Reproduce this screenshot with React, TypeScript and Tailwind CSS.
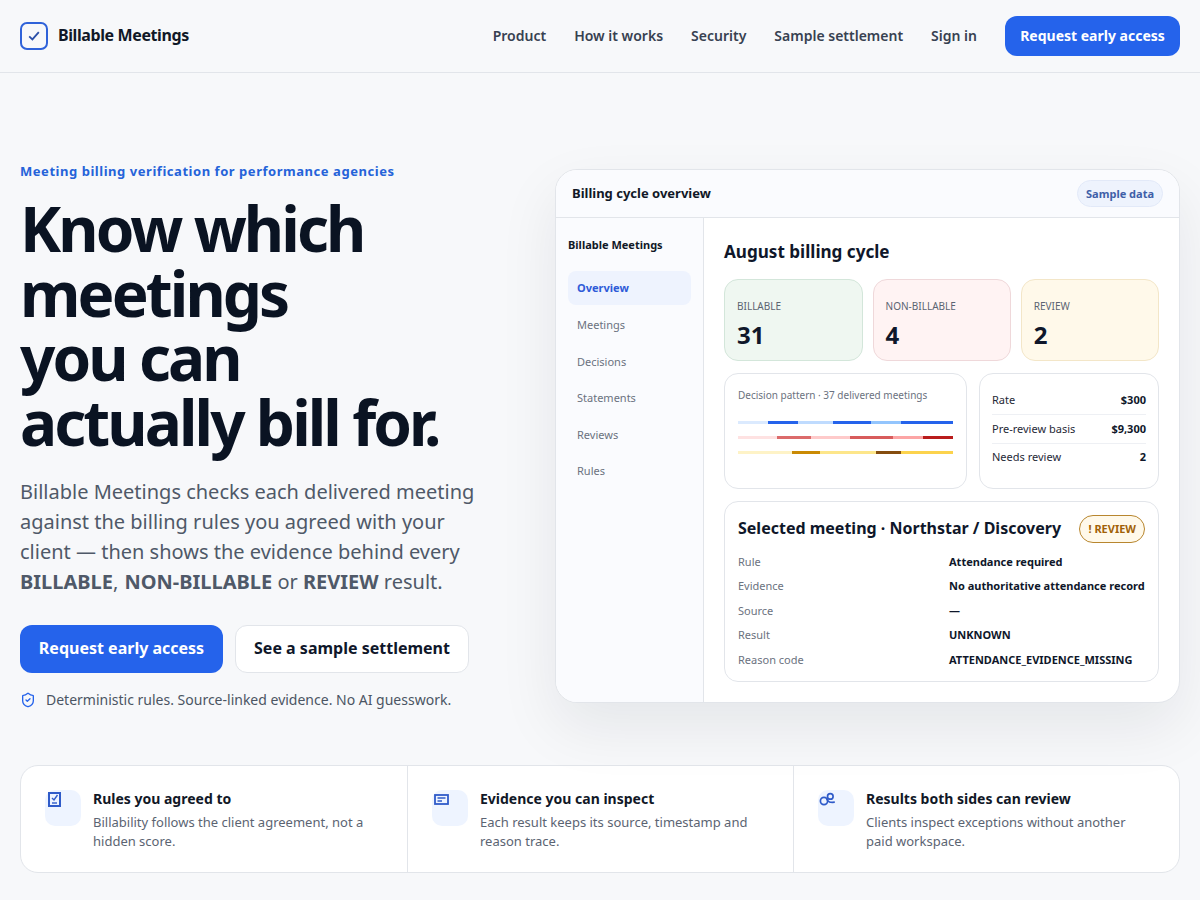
import React from "react";

const NAV = ["Product", "How it works", "Security", "Sample settlement", "Sign in"];
const SIDE = ["Meetings", "Decisions", "Statements", "Reviews", "Rules"];

function Bar({ segs }: { segs: [number, string][] }) {
  return (
    <div className="flex h-[3px] w-[215px]">
      {segs.map(([w, c], i) => (
        <div key={i} className="h-full" style={{ width: w, background: c }} />
      ))}
    </div>
  );
}

function Stat({ label, value, cls }: { label: string; value: string; cls: string }) {
  return (
    <div className={`h-[82px] rounded-[14px] border px-3 pt-[16px] ${cls}`}>
      <div className="text-[10px] leading-[20px] text-[#5b6472]">{label}</div>
      <div className="mt-[4px] text-[24px] font-bold leading-[30px] text-[#0f172a]">{value}</div>
    </div>
  );
}

function Row({ k, v, cls }: { k: string; v: string; cls: string }) {
  return (
    <div className={`flex items-center justify-between text-[11px] ${cls}`}>
      <span className="text-[#1f2937]">{k}</span>
      <span className="font-bold text-[#0f172a]">{v}</span>
    </div>
  );
}

function Detail({ k, v }: { k: string; v: string }) {
  return (
    <div className="flex h-[24.4px] items-center text-[11px]">
      <span className="w-[211px] text-[#6b7280]">{k}</span>
      <span className="font-bold text-[#0f172a]">{v}</span>
    </div>
  );
}

function Feature({ icon, title, text, last, w }: { icon: React.ReactNode; title: string; text: string; last?: boolean; w: string }) {
  return (
    <div className={`flex h-full gap-[12px] pl-[24px] pt-[24px] ${w} ${last ? "" : "border-r border-[#e2e5ea]"}`}>
      <div className="h-[36px] w-[36px] shrink-0 rounded-[10px] bg-[#eef4ff]">{icon}</div>
      <div>
        <div className="text-[14px] font-bold leading-[18px] text-[#111827]">{title}</div>
        <div className="mt-[5px] w-[285px] text-[13px] leading-[19px] text-[#5b6472]">{text}</div>
      </div>
    </div>
  );
}

export default function App() {
  return (
    <div
      className="h-[900px] w-[1200px] overflow-hidden bg-[#f7f8fa]"
      style={{ fontFamily: '"Noto Sans", sans-serif' }}
    >
      <header className="flex h-[73px] items-center justify-between border-b border-[#e2e5ea] px-5 pb-[1px]">
        <div className="flex items-center gap-[10px]">
          <div className="flex h-[28px] w-[28px] items-center justify-center rounded-[7px] border-2 border-[#2f62d9]">
            <svg width="14" height="14" viewBox="0 0 14 14" fill="none" stroke="#2b4fa8" strokeWidth="1.8">
              <path d="M2.2 7.4 L5.4 10.4 L11.8 3.2" />
            </svg>
          </div>
          <span className="pb-[2px] text-[16px] font-bold tracking-[-0.4px] text-[#111827]">Billable Meetings</span>
        </div>
        <nav className="flex items-center gap-[28px]">
          {NAV.map((n) => (
            <span key={n} className="text-[14px] font-semibold text-[#374151]">{n}</span>
          ))}
          <span className="flex h-[40px] w-[175px] items-center justify-center rounded-[12px] bg-[#2563eb] text-[14px] font-bold text-white">
            Request early access
          </span>
        </nav>
      </header>

      <main className="flex items-center justify-between px-5 pt-[88px]">
        <div className="h-[550px] w-[480px]">
          <div className="text-[13px] font-bold leading-[20px] tracking-[0.54px] text-[#2563d9]">
            Meeting billing verification for performance agencies
          </div>
          <h1 className="mt-[15px] text-[62px] font-bold leading-[64.6px] tracking-[-2.9px] text-[#0a1322]">
            Know which
            <br />
            meetings
            <br />
            you can
            <br />
            actually bill for.
          </h1>
          <p className="mt-[23px] text-[20px] leading-[30px] text-[#4f5968]">
            Billable Meetings checks each delivered meeting against the billing rules you agreed with your client — then shows the evidence behind every{" "}
            <b className="font-bold">BILLABLE</b>, <b className="ml-[1px] font-bold">NON-BILLABLE</b> or{" "}
            <b className="font-bold">REVIEW</b> result.
          </p>
          <div className="mt-[28px] flex gap-[12px]">
            <span className="flex h-[48px] w-[203px] items-center justify-center rounded-[12px] bg-[#2563eb] pb-[2px] text-[16px] font-bold text-white">
              Request early access
            </span>
            <span className="flex h-[48px] w-[234px] items-center justify-center rounded-[12px] border border-[#e2e5ea] bg-white pb-[2px] text-[16px] font-bold text-[#0f172a]">
              See a sample settlement
            </span>
          </div>
          <div className="mt-[16px] flex items-center gap-[10px] text-[14px] text-[#4b5563]">
            <svg width="16" height="16" viewBox="0 0 24 24" fill="none" stroke="#2563eb" strokeWidth="2" strokeLinecap="round" strokeLinejoin="round">
              <path d="M20 13c0 5-3.5 7.5-7.66 8.95a1 1 0 0 1-.67-.01C7.5 20.5 4 18 4 13V6a1 1 0 0 1 1-1c2 0 4.5-1.2 6.24-2.72a1.17 1.17 0 0 1 1.52 0C14.51 3.81 17 5 19 5a1 1 0 0 1 1 1z" />
              <path d="m9 12 2 2 4-4" />
            </svg>
            <span>Deterministic rules. Source-linked evidence. No AI guesswork.</span>
          </div>
        </div>

        <div className="h-[534px] w-[625px] overflow-hidden rounded-[22px] border border-[#e2e5ea] bg-white shadow-[0_24px_60px_rgba(15,23,42,0.08)]">
          <div className="flex h-[48px] items-center justify-between border-b border-[#e2e5ea] bg-[#fafbfe] pl-[16px] pr-[16px]">
            <span className="text-[13px] font-bold text-[#111827]">Billing cycle overview</span>
            <span className="flex h-[27px] items-center rounded-full border border-[#e2e9f8] bg-[#eef3fd] px-[8px] pt-[1px] text-[11px] font-bold text-[#3f5fa8]">
              Sample data
            </span>
          </div>
          <div className="flex h-[485px]">
            <div className="w-[148px] border-r border-[#e2e5ea] bg-[#fafbfe] pl-[12px] pr-[12px] pt-[18px]">
              <div className="text-[11px] font-bold leading-[18px] text-[#111827]">Billable Meetings</div>
              <div className="mt-[17px] flex h-[34px] items-center rounded-[8px] bg-[#eef3fe] pl-[9px] text-[11px] font-bold text-[#2f5bd8]">
                Overview
              </div>
              <div className="mt-[2px]">
                {SIDE.map((s) => (
                  <div key={s} className="flex h-[36.5px] items-center pl-[9px] text-[11px] text-[#6b7280]">{s}</div>
                ))}
              </div>
            </div>
            <div className="flex-1 pl-[20px] pr-[20px] pt-[20px]">
              <div className="text-[17.1px] font-bold leading-[28px] text-[#0f172a]">August billing cycle</div>
              <div className="mt-[13px] grid grid-cols-[138.55px_138.2px_138.25px] gap-[10px]">
                <Stat label="BILLABLE" value="31" cls="border-[#d3e6da] bg-[#eff7f1]" />
                <Stat label="NON-BILLABLE" value="4" cls="border-[#efd8da] bg-[#fff3f3]" />
                <Stat label="REVIEW" value="2" cls="border-[#f3e6c8] bg-[#fff9ea]" />
              </div>
              <div className="mt-[12px] flex gap-[12px]">
                <div className="h-[116px] w-[243px] rounded-[14px] border border-[#e2e5ea] px-[13px] pt-[13px]">
                  <div className="text-[10px] leading-[16px] text-[#6b7280]">Decision pattern · 37 delivered meetings</div>
                  <div className="mt-[18px] flex flex-col gap-[12px]">
                    <Bar segs={[[30, "#dbeafe"], [30, "#2563eb"], [35, "#bfdbfe"], [38, "#2563eb"], [30, "#93c5fd"], [52, "#2563eb"]]} />
                    <Bar segs={[[39, "#fee2e2"], [34, "#dc6b6b"], [39, "#fecaca"], [43, "#d85c5c"], [30, "#fca5a5"], [30, "#b91c1c"]]} />
                    <Bar segs={[[54, "#fef3c7"], [28, "#ca8a04"], [56, "#fde68a"], [25, "#854d0e"], [52, "#fcd34d"]]} />
                  </div>
                </div>
                <div className="h-[116px] w-[180px] rounded-[14px] border border-[#e2e5ea] px-[12px] pt-[12px]">
                  <Row k="Rate" v="$300" cls="h-[29px] border-b border-[#eef0f4]" />
                  <Row k="Pre-review basis" v="$9,300" cls="h-[28.5px] border-b border-[#eef0f4]" />
                  <Row k="Needs review" v="2" cls="h-[27px]" />
                </div>
              </div>
              <div className="mt-[12px] h-[181px] w-[435px] rounded-[14px] border border-[#e2e5ea] px-[13px] pt-[13px]">
                <div className="flex items-center justify-between">
                  <span className="pb-[2px] text-[16px] font-bold text-[#0f172a]">Selected meeting · Northstar / Discovery</span>
                  <span className="flex h-[28px] items-center rounded-full border border-[#b8862e] bg-[#fff9ea] px-[8px] text-[11px] font-bold text-[#a16207]">! REVIEW</span>
                </div>
                <div className="mt-[7px]">
                  <Detail k="Rule" v="Attendance required" />
                  <Detail k="Evidence" v="No authoritative attendance record" />
                  <Detail k="Source" v="—" />
                  <Detail k="Result" v="UNKNOWN" />
                  <Detail k="Reason code" v="ATTENDANCE_EVIDENCE_MISSING" />
                </div>
              </div>
            </div>
          </div>
        </div>
      </main>

      <section className="mx-5 mt-[54px] flex h-[108px] rounded-[18px] border border-[#e2e5ea] bg-white">
        <Feature
          w="w-[387px]"
          title="Rules you agreed to"
          text="Billability follows the client agreement, not a hidden score."
          icon={
            <svg width="20" height="20" viewBox="0 0 20 20" fill="none" stroke="#2f5bc9" strokeWidth="2">
              <rect x="4" y="3" width="11" height="13" />
              <path d="M7 8 L9 10 L12.5 5" strokeWidth="1.4" />
              <path d="M7 13 H12" strokeWidth="1.4" />
            </svg>
          }
        />
        <Feature
          w="w-[386px]"
          title="Evidence you can inspect"
          text="Each result keeps its source, timestamp and reason trace."
          icon={
            <svg width="20" height="20" viewBox="0 0 20 20" fill="none" stroke="#2f5bc9" strokeWidth="1.8">
              <rect x="3" y="5" width="13" height="9" />
              <path d="M5.5 8 H13.5 M5.5 11 H10" strokeWidth="1.4" />
            </svg>
          }
        />
        <Feature
          last
          w="flex-1"
          title="Results both sides can review"
          text="Clients inspect exceptions without another paid workspace."
          icon={
            <svg width="20" height="20" viewBox="0 0 20 20" fill="none" stroke="#2f5bc9" strokeWidth="1.7">
              <circle cx="6" cy="11" r="3.6" />
              <circle cx="12.3" cy="6.4" r="2.8" />
              <path d="M8.5 8.5 C10 12.5 12 12.5 16.8 12.2" />
            </svg>
          }
        />
      </section>
    </div>
  );
}
